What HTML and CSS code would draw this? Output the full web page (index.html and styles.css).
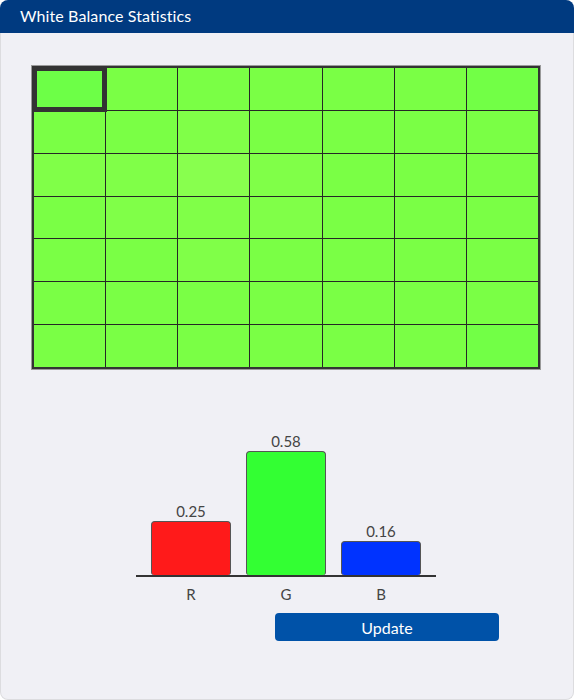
FILE: index.html
```html
<!DOCTYPE html>
<html>
<head>
<meta charset="utf-8">
<link rel="stylesheet" href="styles.css">
</head>
<body>
<div class="card">
  <div class="header">White Balance Statistics</div>
  <div class="body">
    <div class="grid">
      <div class="cell sel c0"></div><div class="cell c1"></div><div class="cell c1"></div><div class="cell c1"></div><div class="cell c1"></div><div class="cell c1"></div><div class="cell c0"></div>
      <div class="cell c1"></div><div class="cell c1"></div><div class="cell c2"></div><div class="cell c1"></div><div class="cell c1"></div><div class="cell c1"></div><div class="cell c1"></div>
      <div class="cell c2"></div><div class="cell c2"></div><div class="cell c3"></div><div class="cell c2"></div><div class="cell c1"></div><div class="cell c1"></div><div class="cell c1"></div>
      <div class="cell c1"></div><div class="cell c2"></div><div class="cell c2"></div><div class="cell c2"></div><div class="cell c1"></div><div class="cell c1"></div><div class="cell c1"></div>
      <div class="cell c1"></div><div class="cell c1"></div><div class="cell c2"></div><div class="cell c1"></div><div class="cell c1"></div><div class="cell c1"></div><div class="cell c1"></div>
      <div class="cell c1"></div><div class="cell c1"></div><div class="cell c1"></div><div class="cell c1"></div><div class="cell c1"></div><div class="cell c1"></div><div class="cell c1"></div>
      <div class="cell c1"></div><div class="cell c1"></div><div class="cell c1"></div><div class="cell c1"></div><div class="cell c1"></div><div class="cell c1"></div><div class="cell c0"></div>
    </div>
    <div class="chart">
      <div class="col">
        <div class="val">0.25</div>
        <div class="bar red" style="height:54px"></div>
      </div>
      <div class="col">
        <div class="val">0.58</div>
        <div class="bar green" style="height:124px"></div>
      </div>
      <div class="col">
        <div class="val">0.16</div>
        <div class="bar blue" style="height:34px"></div>
      </div>
    </div>
    <div class="labels">
      <div class="lab">R</div>
      <div class="lab">G</div>
      <div class="lab">B</div>
    </div>
    <div class="actions">
      <button class="btn">Update</button>
    </div>
  </div>
</div>
</body>
</html>
```
FILE: styles.css
```css
html, body {
  margin: 0;
  padding: 0;
  background: #ffffff;
}
body {
  font-family: Lato, "Open Sans", sans-serif;
}
.card {
  width: 574px;
  height: 700px;
  display: flex;
  flex-direction: column;
}
.header {
  height: 33px;
  box-sizing: border-box;
  background: #003a80;
  color: #ffffff;
  font-size: 16px;
  padding: 6px 0 0 20px;
  border-radius: 8px 8px 0 0;
  letter-spacing: 0.1px;
}
.body {
  flex: 1;
  background: #f0f0f5;
  border: 1px solid #dcdcdf;
  border-top: none;
  border-radius: 0 0 8px 8px;
}
.grid {
  margin: 33px 0 0 31px;
  width: 508px;
  height: 303px;
  box-sizing: border-box;
  border: 2px solid #333333;
  box-shadow: 0 0 0 1px #9a9a9a;
  background: #262626;
  display: grid;
  grid-template-columns: repeat(7, 1fr);
  grid-template-rows: repeat(7, 1fr);
  gap: 1px;
}
.cell {
  background: #7aff45;
}
.c0 { background: #72ff46; }
.c1 { background: #7aff45; }
.c2 { background: #80ff48; }
.c3 { background: #88ff4e; }
.sel {
  position: relative;
  z-index: 1;
  outline: 5px solid #333333;
  outline-offset: -3px;
  background: #6dff47;
}
.chart {
  margin: 58px 0 0 135px;
  width: 300px;
  height: 150px;
  padding: 0 15px;
  box-sizing: border-box;
  border-bottom: 2px solid #333333;
  display: flex;
  align-items: flex-end;
  gap: 15px;
}
.col {
  width: 80px;
  display: flex;
  flex-direction: column;
  align-items: stretch;
}
.val {
  text-align: center;
  font-size: 15px;
  line-height: 18px;
  color: #444444;
  margin-bottom: 1px;
}
.bar {
  box-sizing: border-box;
  border: 1px solid #555555;
  border-bottom: none;
  border-radius: 4px 4px 3px 3px;
}
.red { background: #ff1a1a; }
.green { background: #33ff33; }
.blue { background: #0033ff; }
.labels {
  margin: 8px 0 0 135px;
  width: 300px;
  padding: 0 15px;
  box-sizing: border-box;
  display: flex;
  gap: 15px;
}
.lab {
  width: 80px;
  text-align: center;
  font-size: 15px;
  line-height: 18px;
  color: #444444;
}
.actions {
  margin: 10px 0 0 274px;
}
.btn {
  width: 224px;
  height: 28px;
  border: none;
  border-radius: 4px;
  background: #0052a8;
  color: #ffffff;
  font-family: Lato, "Open Sans", sans-serif;
  font-size: 16px;
  padding: 0;
  cursor: pointer;
}
```
